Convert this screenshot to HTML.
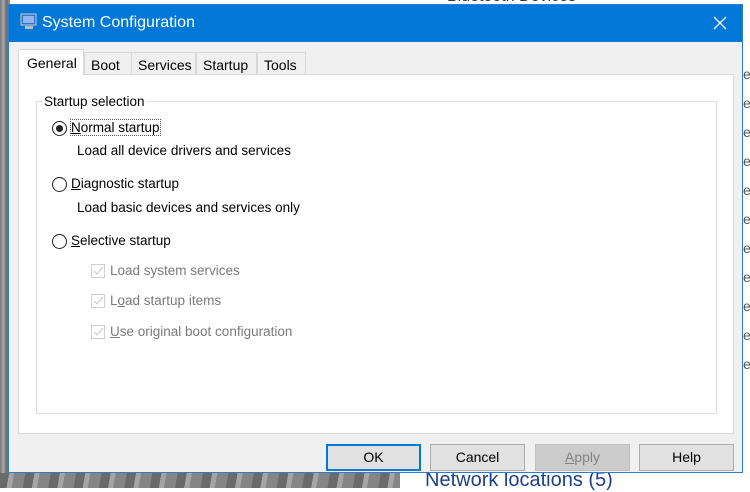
<!DOCTYPE html>
<html><head><style>
*{margin:0;padding:0;box-sizing:border-box}
body{width:750px;height:488px;overflow:hidden;position:relative;font-family:"Liberation Sans",sans-serif;font-size:13.5px;color:#000;background:#fff}
.abs{position:absolute}
.rock{left:0;top:0;width:10px;height:488px;background:linear-gradient(90deg,#777,#aaa,#666,#999)}
.rock2{left:0;top:473px;width:400px;height:15px;background:repeating-linear-gradient(100deg,#6a6a6a 0 9px,#a5a5a5 9px 14px,#858585 14px 25px)}
.win{left:8px;top:4px;width:735px;height:469px;background:#f0f0f0;border:1px solid #2b7dd0}
.title{left:0;top:0;width:733px;height:37px;background:#0078d7;color:#fff;font-size:16px}
.panel{left:9px;top:69px;width:716px;height:360px;background:#fff;border:1px solid #d9d9d9}
.grp{left:17px;top:26px;width:681px;height:313px;border:1px solid #dcdcdc}
.tab{top:47px;height:23px;border:1px solid #d9d9d9;border-bottom:none;background:#f0f0f0;padding:4px 0 0 6px;font-size:14px}
.btn{top:439px;height:27px;width:95px;background:#e1e1e1;border:1px solid #adadad;text-align:center;line-height:25px;font-size:14px}
.radio{width:15px;height:15px;border:1.3px solid #222;border-radius:50%;background:#fff}
.chk{width:14px;height:14px;border:1px solid #cfcfcf;background:#fff}
.grey{color:#7a7a7a}
</style></head><body>
<div class="abs rock"></div>
<div class="abs rock2"></div>
<div class="abs" style="left:743px;top:0;width:7px;height:488px;color:#555;font-size:14px;line-height:29px;padding-top:60px">e<br>e<br>e<br>e<br>e<br>e<br>e<br>e<br>e<br>e<br>e</div>
<div class="abs" style="left:425px;top:469px;color:#1e3f8a;font-size:20px">Network locations (5)</div>
<div class="abs" style="left:447px;top:-12px;color:#333;font-size:16px">Bluetooth Devices</div>
<div class="abs win">
 <div class="abs title">
  <svg class="abs" style="left:10px;top:7px" width="20" height="20" viewBox="0 0 20 20"><rect x="2" y="2" width="15" height="11" fill="#3b6fc9" stroke="#ccc"/><rect x="4" y="4" width="11" height="7" fill="#8fb7ee"/><rect x="6" y="14" width="8" height="3" fill="#bbb"/></svg>
  <div class="abs" style="left:33px;top:9px">System Configuration</div>
  <svg class="abs" style="left:704px;top:11px" width="14" height="14"><path d="M1 1L13 13M13 1L1 13" stroke="#fff" stroke-width="1.3"/></svg>
 </div>
 <div class="abs tab" style="left:75px;width:52px">Boot</div>
 <div class="abs tab" style="left:122px;width:65px">Services</div>
 <div class="abs tab" style="left:187px;width:61px">Startup</div>
 <div class="abs tab" style="left:248px;width:49px">Tools</div>
 <div class="abs panel">
  <div class="abs grp"></div>
  <div class="abs" style="left:23px;top:19px;background:#fff;padding:0 2px">Startup selection</div>
  <div class="abs radio" style="left:33px;top:46px"><div style="width:7px;height:7px;background:#222;border-radius:50%;margin:2.7px"></div></div>
  <div class="abs" style="left:52px;top:45px;outline:1px dotted #555"><u>N</u>ormal startup</div>
  <div class="abs" style="left:58px;top:68px">Load all device drivers and services</div>
  <div class="abs radio" style="left:33px;top:102px"></div>
  <div class="abs" style="left:52px;top:101px"><u>D</u>iagnostic startup</div>
  <div class="abs" style="left:58px;top:125px">Load basic devices and services only</div>
  <div class="abs radio" style="left:33px;top:159px"></div>
  <div class="abs" style="left:52px;top:158px"><u>S</u>elective startup</div>
  <div class="abs chk" style="left:72px;top:189px"><svg width="12" height="12"><path d="M2 6L5 9L11 2" stroke="#c8c8c8" fill="none"/></svg></div>
  <div class="abs grey" style="left:91px;top:188px">Load system services</div>
  <div class="abs chk" style="left:72px;top:219px"><svg width="12" height="12"><path d="M2 6L5 9L11 2" stroke="#c8c8c8" fill="none"/></svg></div>
  <div class="abs grey" style="left:91px;top:218px">L<u>o</u>ad startup items</div>
  <div class="abs chk" style="left:72px;top:250px"><svg width="12" height="12"><path d="M2 6L5 9L11 2" stroke="#c8c8c8" fill="none"/></svg></div>
  <div class="abs grey" style="left:91px;top:249px"><u>U</u>se original boot configuration</div>
 </div>
 <div class="abs" style="left:9px;top:44px;width:66px;height:26px;background:#fff;border:1px solid #d9d9d9;border-bottom:none;padding:5px 0 0 8px;font-size:14px">General</div>
 <div class="abs btn" style="left:317px;border:2px solid #0078d7;line-height:23px">OK</div>
 <div class="abs btn" style="left:421px">Cancel</div>
 <div class="abs btn" style="left:526px;background:#ccc;border-color:#bfbfbf;color:#838383"><u>A</u>pply</div>
 <div class="abs btn" style="left:630px">Help</div>
</div>
</body></html>
